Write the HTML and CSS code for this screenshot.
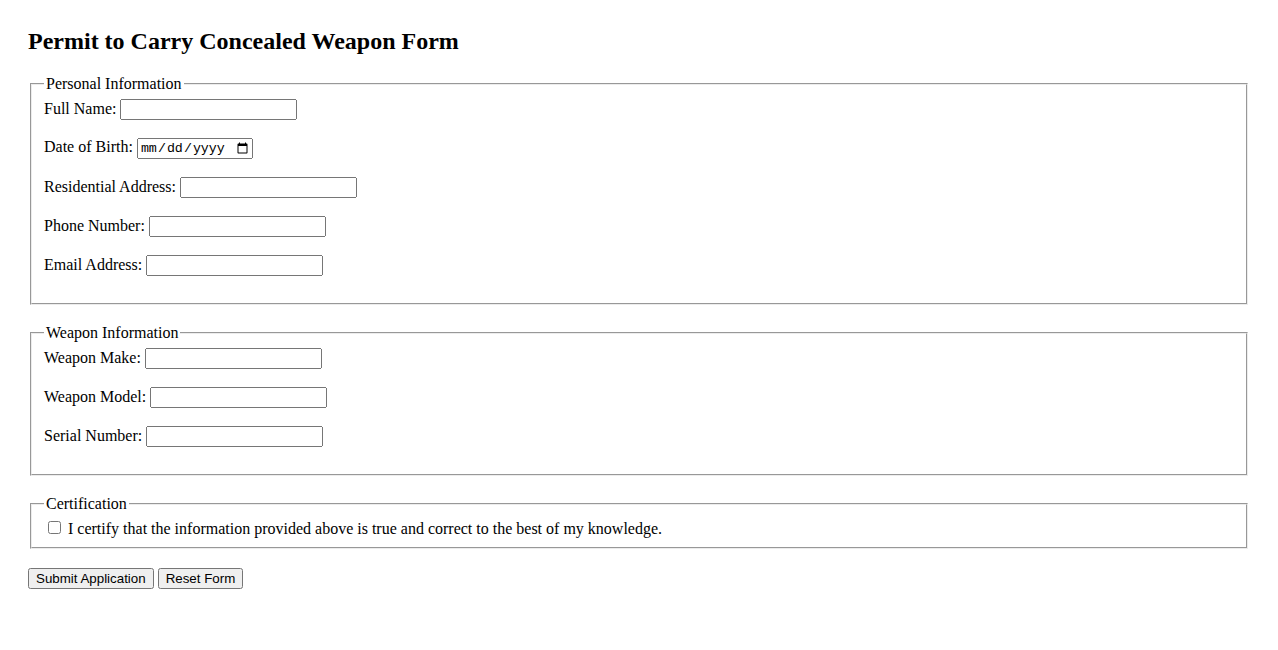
FILE: index.html
```html
<!DOCTYPE html>
<html lang="en">
  <head>
    <meta charset="UTF-8" />
    <meta name="viewport" content="width=device-width, initial-scale=1.0" />
    <title>Permit to Carry Concealed Weapon Form</title>
    <link rel="stylesheet" href="styles.css">
  </head>
  <body>
    <h2>Permit to Carry Concealed Weapon Form</h2>
    <form>
      <fieldset>
        <legend>Personal Information</legend>
        <label for="fullName">Full Name:</label>
        <input type="text" id="fullName" name="fullName"><br><br>
        <label for="dob">Date of Birth:</label>
        <input type="date" id="dob" name="dob"><br><br>
        <label for="address">Residential Address:</label>
        <input type="text" id="address" name="address"><br><br>
        <label for="phone">Phone Number:</label>
        <input type="tel" id="phone" name="phone"><br><br>
        <label for="email">Email Address:</label>
        <input type="email" id="email" name="email"><br><br>
      </fieldset>

      <fieldset>
        <legend>Weapon Information</legend>
        <label for="make">Weapon Make:</label>
        <input type="text" id="make" name="make"><br><br>
        <label for="model">Weapon Model:</label>
        <input type="text" id="model" name="model"><br><br>
        <label for="serial">Serial Number:</label>
        <input type="text" id="serial" name="serial"><br><br>
      </fieldset>

      <fieldset>
        <legend>Certification</legend>
        <input type="checkbox" id="certify" name="certify">
        <label for="certify">I certify that the information provided above is true and correct to the best of my knowledge.</label>
      </fieldset>

      <button type="submit">Submit Application</button>
      <button type="reset">Reset Form</button>
    </form>
  </body>
</html>
```

FILE: styles.css
```css
body {
  font-family: "Liberation Serif", "Times New Roman", serif;
  margin: 0;
  padding: 28px;
}
h2 {
  margin: 0 0 20px;
}
fieldset {
  margin: 0 2px 19px;
  padding-bottom: 9px;
  border: 2px groove #ececec;
}
input,
button {
  font-family: "Liberation Sans", Arial, sans-serif;
  font-size: 13.33px;
}
input[type="text"],
input[type="tel"],
input[type="email"] {
  box-sizing: border-box;
  width: 177px;
}
input[type="date"] {
  box-sizing: border-box;
  width: 116px;
  font-family: "Liberation Mono", "Courier New", monospace;
}
```
